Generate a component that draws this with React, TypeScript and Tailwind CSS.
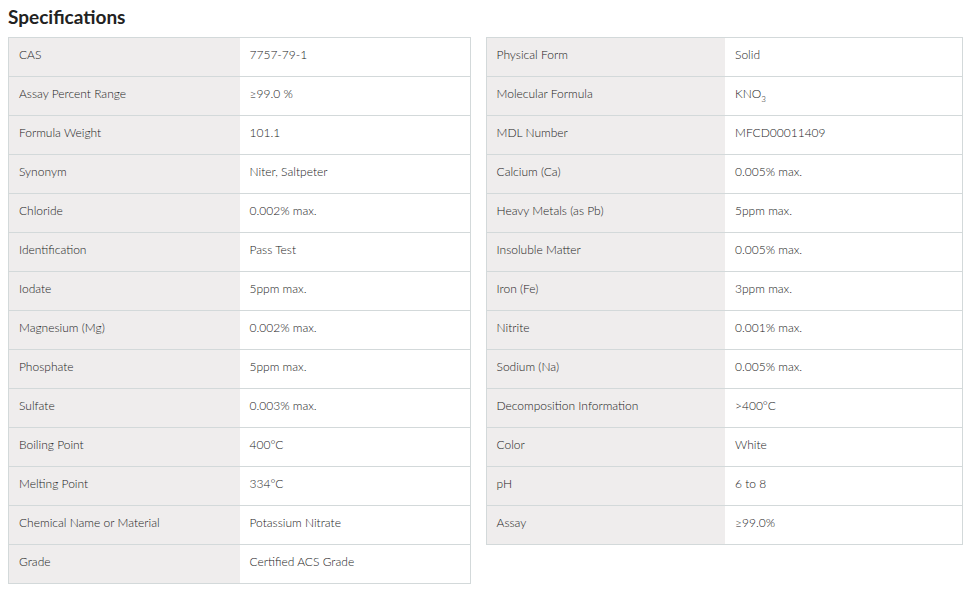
import type { ReactNode } from 'react';

type Row = [string, ReactNode];

const left: Row[] = [
    ['CAS', '7757-79-1'],
    ['Assay Percent Range', '≥99.0 %'],
    ['Formula Weight', '101.1'],
    ['Synonym', 'Niter, Saltpeter'],
    ['Chloride', '0.002% max.'],
    ['Identification', 'Pass Test'],
    ['Iodate', '5ppm max.'],
    ['Magnesium (Mg)', '0.002% max.'],
    ['Phosphate', '5ppm max.'],
    ['Sulfate', '0.003% max.'],
    ['Boiling Point', '400°C'],
    ['Melting Point', '334°C'],
    ['Chemical Name or Material', 'Potassium Nitrate'],
    ['Grade', 'Certified ACS Grade'],
];

const right: Row[] = [
    ['Physical Form', 'Solid'],
    [
        'Molecular Formula',
        <>
            KNO<sub className="text-[8px] align-[-2px]">3</sub>
        </>,
    ],
    ['MDL Number', 'MFCD00011409'],
    ['Calcium (Ca)', '0.005% max.'],
    ['Heavy Metals (as Pb)', '5ppm max.'],
    ['Insoluble Matter', '0.005% max.'],
    ['Iron (Fe)', '3ppm max.'],
    ['Nitrite', '0.001% max.'],
    ['Sodium (Na)', '0.005% max.'],
    ['Decomposition Information', '>400°C'],
    ['Color', 'White'],
    ['pH', '6 to 8'],
    ['Assay', '≥99.0%'],
];

function SpecTable({ rows, width, head }: { rows: Row[]; width: string; head: string }) {
    return (
        <table className={`${width} border-collapse border border-[#d3d9da] table-fixed`}>
            <tbody>
                {rows.map(([label, value]) => (
                    <tr key={label} className="h-[39px] border-b border-[#d3d9da]">
                        <td className={`${head} bg-[#efeded] pl-[10px] pb-[4px] align-middle`}>{label}</td>
                        <td className="bg-white pl-[10px] pb-[4px] align-middle">{value}</td>
                    </tr>
                ))}
            </tbody>
        </table>
    );
}

export default function App() {
    return (
        <div className="min-h-[591px] bg-white px-2 pt-[5px] text-[12px] font-light text-[#222] font-['Lato','Liberation_Sans',sans-serif]">
            <h2 className="text-[19px] font-bold text-[#222] leading-[24px] mb-[8px]">
                Specifications
            </h2>
            <div className="flex items-start gap-[15px]">
                <SpecTable rows={left} width="w-[463px]" head="w-[231px]" />
                <SpecTable rows={right} width="w-[478px]" head="w-[239px]" />
            </div>
        </div>
    );
}
